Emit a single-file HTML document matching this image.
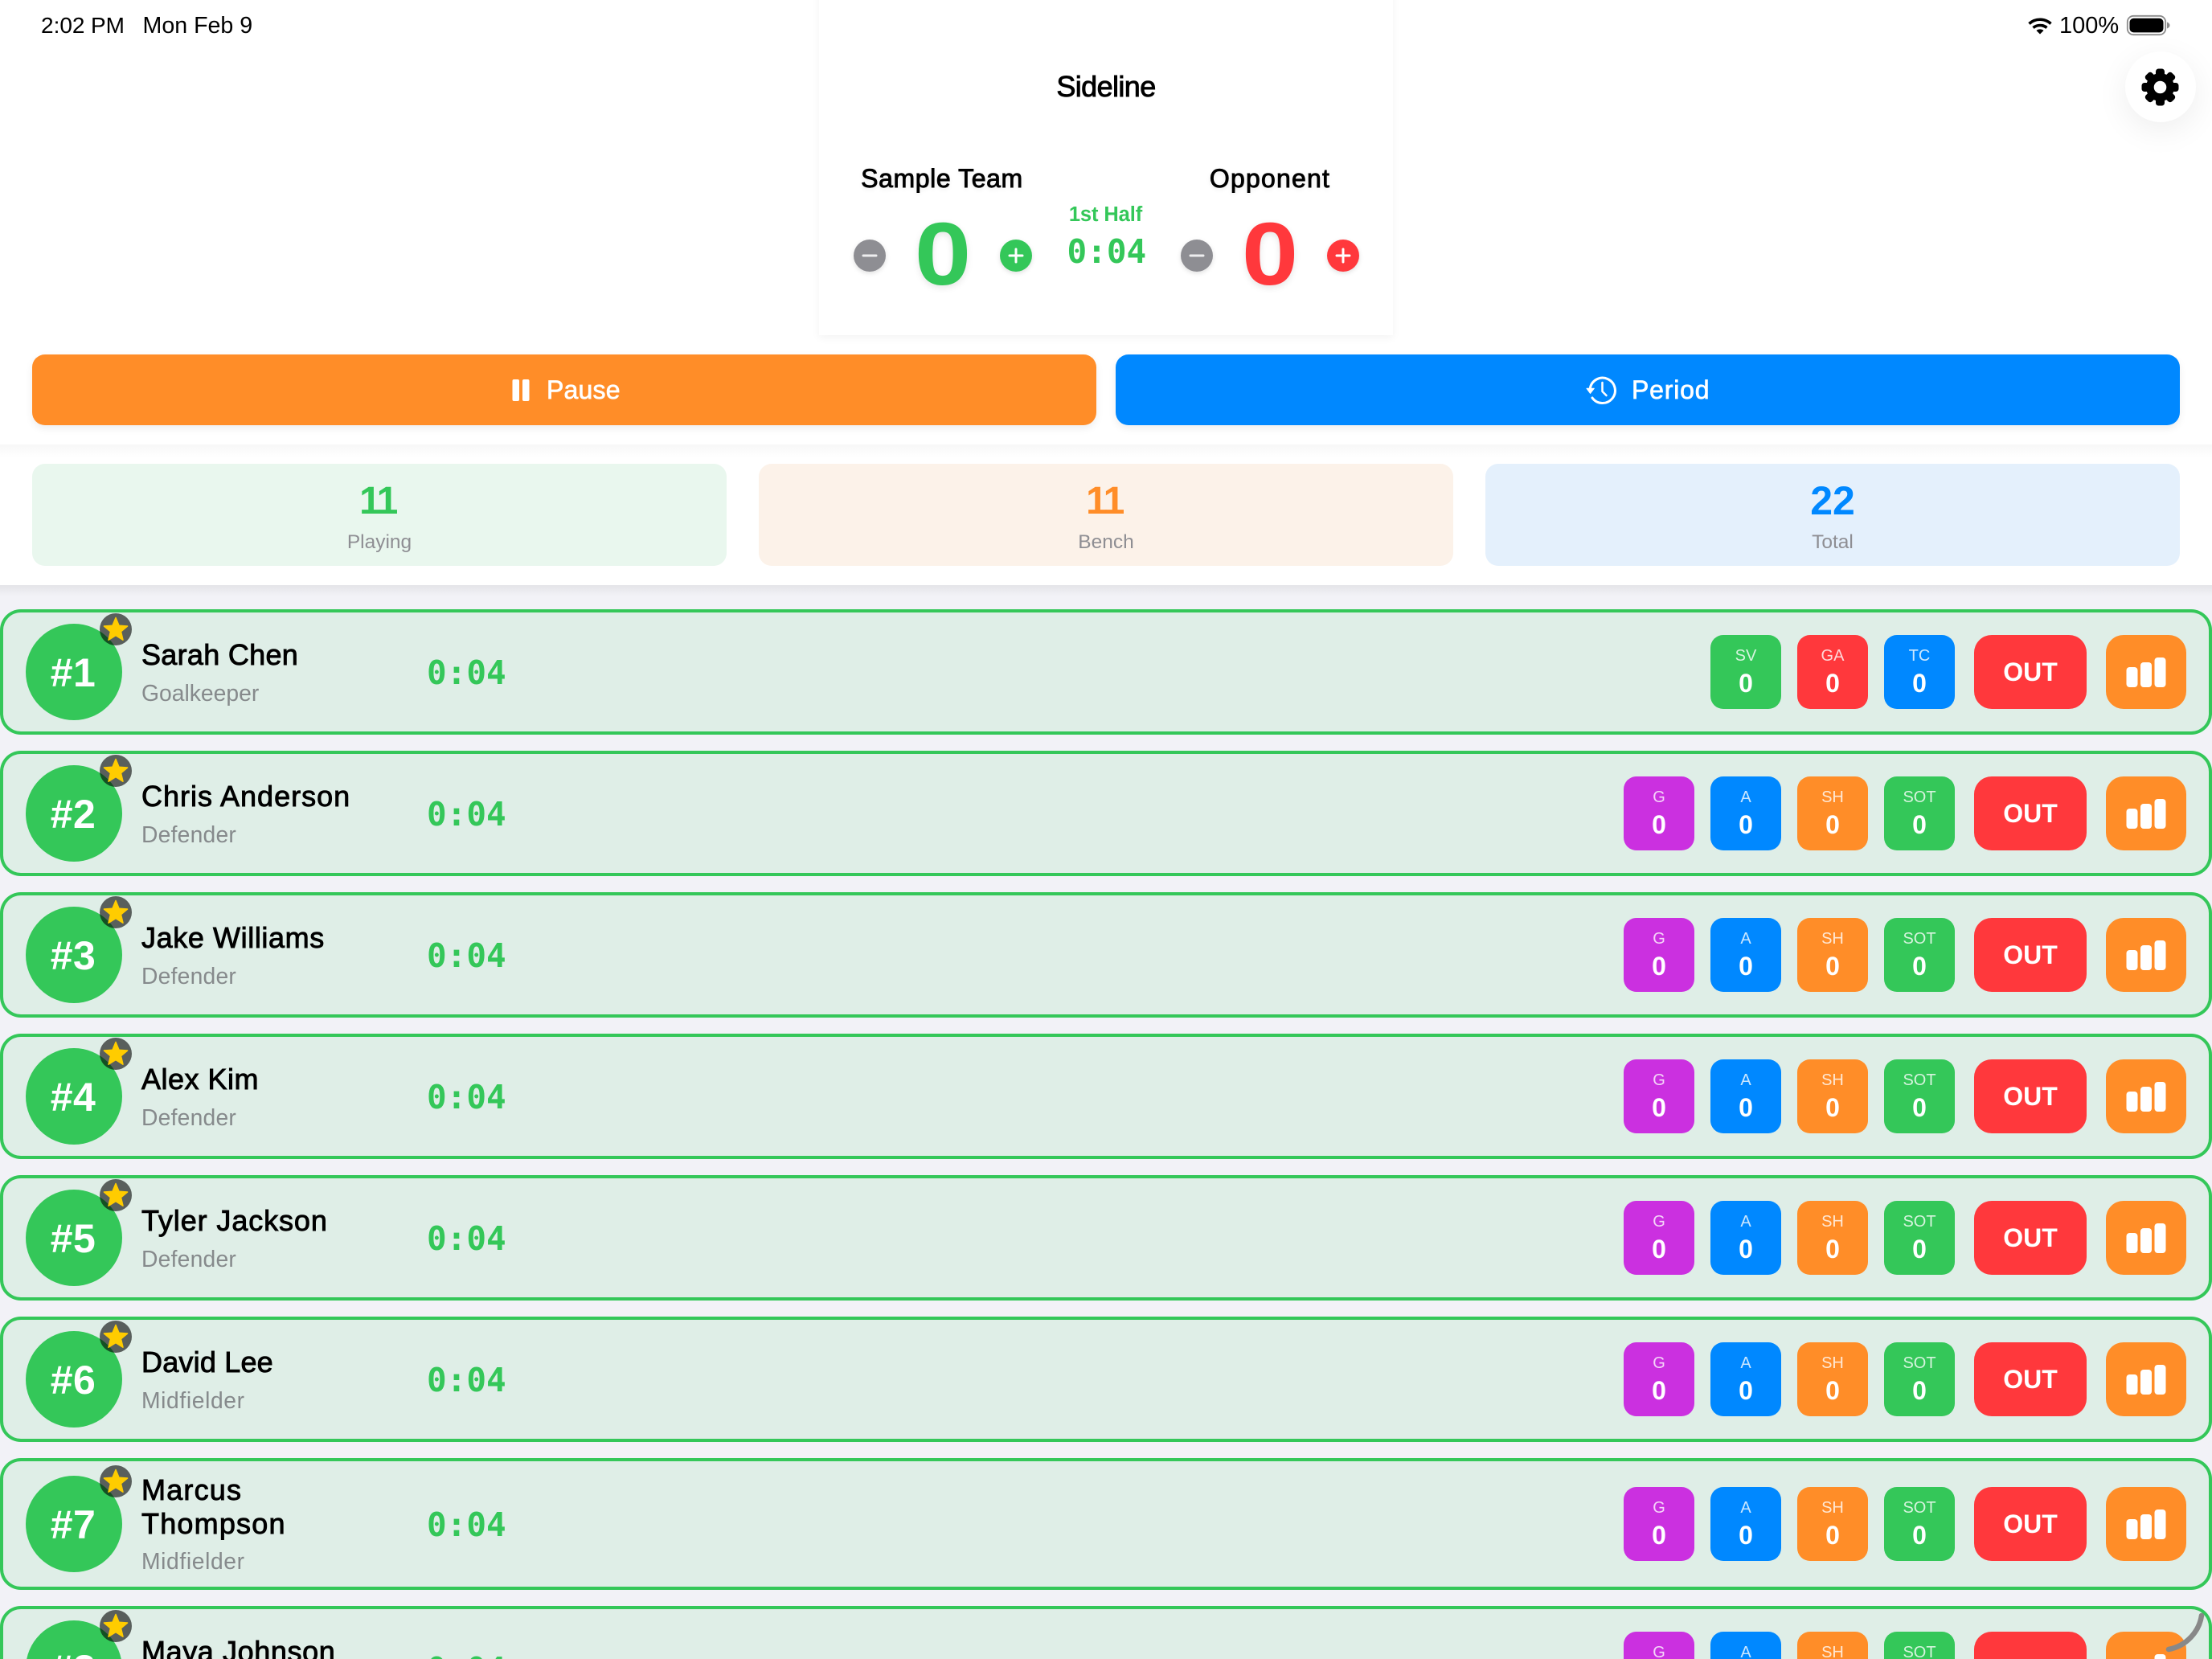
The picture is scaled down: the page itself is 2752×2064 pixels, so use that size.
<!DOCTYPE html>
<html>
<head>
<meta charset="utf-8">
<title>Sideline</title>
<style>
*{box-sizing:border-box;margin:0;padding:0}
html,body{width:2752px;height:2064px;overflow:hidden;background:#f2f2f7;font-family:"Liberation Sans",Arial,sans-serif}
#page{position:relative;width:2752px;height:2064px;overflow:hidden;background:#f2f2f7}
.t{position:absolute;white-space:nowrap;line-height:1}
.m{-webkit-text-stroke:.9px currentColor}
.c{text-align:center}
.mono{font-family:"DejaVu Sans Mono","Liberation Mono",monospace;font-weight:bold;color:#34c759;font-size:41px}
.hdr{position:absolute;left:0;top:0;width:2752px;height:728px;background:#fff}
.sh1{position:absolute;left:0;top:553px;width:2752px;height:16px;background:linear-gradient(rgba(0,0,0,.03),rgba(0,0,0,0))}
.sh2{position:absolute;left:0;top:728px;width:2752px;height:14px;background:linear-gradient(rgba(0,0,0,.06),rgba(0,0,0,0))}
.score{position:absolute;left:1019px;top:-20px;width:714px;height:437px;background:#fff;box-shadow:0 3px 10px rgba(0,0,0,.05)}
.bar{position:absolute;top:441px;height:88px;width:1324px;border-radius:16px;box-shadow:0 4px 10px rgba(0,0,0,.07)}
.stat{position:absolute;top:577px;height:127px;width:864px;border-radius:16px}
.stat b{position:absolute;left:0;width:100%;top:23px;text-align:center;font-size:48px;line-height:1}
.stat span{position:absolute;left:0;width:100%;top:86px;text-align:center;font-size:24.500px;line-height:1;color:#8e8e93}
.gear{position:absolute;left:2644px;top:64px;width:88px;height:88px;border-radius:50%;background:#fff;box-shadow:0 10px 40px rgba(0,0,0,.07)}
.row{position:absolute;left:0;width:2752px;background:#dfeee7;border-radius:26px;box-shadow:inset 0 0 0 4px #34c759}
.num{position:absolute;left:31px;top:calc(50% - 60px);width:120px;height:120px;border-radius:50%;background:#34c759;color:#fff;font-weight:bold;font-size:50px;line-height:122px;text-align:center;letter-spacing:.5px;background-clip:padding-box}
.numbg{position:absolute;left:32px;top:calc(50% - 60px);width:120px;height:120px;border-radius:50%;background:#34c759}
.badge{position:absolute;left:124px;top:calc(50% - 73px);width:40px;height:40px;border-radius:50%;background:rgba(0,0,0,.6)}
.badge svg{position:absolute;left:2px;top:2px;width:36px;height:36px}
.name{position:absolute;left:176px;top:38.500px;font-size:36px;line-height:42px;height:42px;margin-top:-3px;color:#000;white-space:nowrap;letter-spacing:.6px;-webkit-text-stroke:.9px #000}
.role{position:absolute;left:176px;top:90.300px;font-size:28.300px;line-height:1;color:#868a8c;white-space:nowrap}
.tm{position:absolute;left:531px;top:calc(50% - 19.500px);line-height:1;white-space:nowrap}
.b{position:absolute;top:calc(50% - 46px);height:92px;color:#fff;text-align:center}
.s{width:88px;border-radius:16px}
.s i{position:absolute;left:0;width:100%;top:16px;font-style:normal;font-size:20px;line-height:1;color:rgba(255,255,255,.8)}
.s b{position:absolute;left:0;width:100%;top:43.500px;font-size:32px;line-height:1}
.out{left:2456px;width:140px;border-radius:22px;background:#ff383c;font-weight:bold;font-size:32px;line-height:92px}
.ch{left:2620px;width:100px;border-radius:22px;background:#ff8d28}
.ch svg{position:absolute;left:0;top:0;width:100px;height:92px}
.pu{background:#cb30e0}.bl{background:#08f}.or{background:#ff8d28}.gr{background:#34c759}.re{background:#ff383c}
.x1{left:2020px}.x2{left:2128px}.x3{left:2236px}.x4{left:2344px}
#ov{position:absolute;left:0;top:0;width:2752px;height:2064px;pointer-events:none}
</style>
</head>
<body>
<div id="page">
<svg width="0" height="0" style="position:absolute">
<defs>
<symbol id="star" viewBox="0 0 36 36"><path d="M18 3.500 L22 13.200 L32.600 14 L24.500 20.800 L27 31.200 L18 25.600 L9 31.200 L11.500 20.800 L3.400 14 L14 13.200 Z" fill="#ffcc00" stroke="#ffcc00" stroke-width="1.500" stroke-linejoin="round"/></symbol>
<symbol id="chart" viewBox="0 0 100 92"><rect x="25.500" y="40" width="14" height="25" rx="4" fill="#fff"/><rect x="43" y="34" width="14" height="31" rx="4" fill="#fff"/><rect x="60.500" y="28" width="14" height="37" rx="4" fill="#fff"/></symbol>
</defs>
</svg>

<div class="hdr"></div>
<div class="sh1"></div>
<div class="score"></div>

<div class="t" style="left:51px;top:18.300px;font-size:28px">2:02</div>
<div class="t" style="left:113px;top:18.300px;font-size:28px">PM</div>
<div class="t" style="left:177.500px;top:18px;font-size:28.600px">Mon Feb 9</div>
<div class="t" style="left:2562px;top:18px;font-size:29px">100%</div>

<div class="t c m" style="left:1176px;width:400px;top:89.500px;font-size:36px;letter-spacing:-.6px">Sideline</div>
<div class="t c m" style="left:972px;width:400px;top:206px;font-size:32px;letter-spacing:.6px;text-shadow:0 2px 6px rgba(0,0,0,.1)">Sample Team</div>
<div class="t c m" style="left:1380px;width:400px;top:206px;font-size:32px;letter-spacing:1.200px;text-shadow:0 2px 6px rgba(0,0,0,.1)">Opponent</div>
<div class="t c" style="left:1275.500px;width:200px;top:254.500px;font-size:25.500px;font-weight:bold;color:#34c759;letter-spacing:-.1px">1st Half</div>
<div class="t mono" style="left:1327.500px;top:293px">0:04</div>
<div class="t c" style="left:1072.500px;width:200px;top:262px;font-size:110px;font-weight:bold;color:#34c759;text-shadow:0 3px 8px rgba(0,0,0,.1);transform:scaleX(1.15)">0</div>
<div class="t c" style="left:1479.500px;width:200px;top:262px;font-size:110px;font-weight:bold;color:#ff383c;text-shadow:0 3px 8px rgba(0,0,0,.1);transform:scaleX(1.15)">0</div>

<div class="bar" style="left:40px;background:#ff8d28"></div>
<div class="bar" style="left:1388px;background:#08f"></div>
<div class="t" style="left:680px;top:469px;font-size:32px;color:#fff;letter-spacing:.2px;-webkit-text-stroke:.7px #fff">Pause</div>
<div class="t" style="left:2030px;top:469px;font-size:32px;color:#fff;letter-spacing:.8px;-webkit-text-stroke:.7px #fff">Period</div>

<div class="stat" style="left:40px;background:#e9f7ee"><b style="color:#34c759;letter-spacing:-2.500px;left:-2px">11</b><span>Playing</span></div>
<div class="stat" style="left:944px;background:#fcf2e9"><b style="color:#ff8d28;letter-spacing:-2.500px;left:-2px">11</b><span>Bench</span></div>
<div class="stat" style="left:1848px;background:#e4f0fc"><b style="color:#08f;font-size:50px;top:21px">22</b><span>Total</span></div>

<div class="sh2"></div>
<div class="gear"></div>

<div class="row" style="top:758px;height:156px"><div class="numbg"></div><div class="num" style="background:none">#1</div><div class="badge"><svg><use href="#star"/></svg></div><div class="name" style="letter-spacing:.3px">Sarah Chen</div><div class="role">Goalkeeper</div><div class="tm mono">0:04</div>
<div class="b s gr x2"><i>SV</i><b>0</b></div><div class="b s re x3"><i>GA</i><b>0</b></div><div class="b s bl x4"><i>TC</i><b>0</b></div><div class="b out">OUT</div><div class="b ch"><svg><use href="#chart"/></svg></div></div>

<div class="row" style="top:934px;height:156px"><div class="numbg"></div><div class="num" style="background:none">#2</div><div class="badge"><svg><use href="#star"/></svg></div><div class="name" style="letter-spacing:1px">Chris Anderson</div><div class="role" style="letter-spacing:.2px">Defender</div><div class="tm mono">0:04</div>
<div class="b s pu x1"><i>G</i><b>0</b></div><div class="b s bl x2"><i>A</i><b>0</b></div><div class="b s or x3"><i>SH</i><b>0</b></div><div class="b s gr x4"><i>SOT</i><b>0</b></div><div class="b out">OUT</div><div class="b ch"><svg><use href="#chart"/></svg></div></div>

<div class="row" style="top:1110px;height:156px"><div class="numbg"></div><div class="num" style="background:none">#3</div><div class="badge"><svg><use href="#star"/></svg></div><div class="name">Jake Williams</div><div class="role" style="letter-spacing:.2px">Defender</div><div class="tm mono">0:04</div>
<div class="b s pu x1"><i>G</i><b>0</b></div><div class="b s bl x2"><i>A</i><b>0</b></div><div class="b s or x3"><i>SH</i><b>0</b></div><div class="b s gr x4"><i>SOT</i><b>0</b></div><div class="b out">OUT</div><div class="b ch"><svg><use href="#chart"/></svg></div></div>

<div class="row" style="top:1286px;height:156px"><div class="numbg"></div><div class="num" style="background:none">#4</div><div class="badge"><svg><use href="#star"/></svg></div><div class="name" style="letter-spacing:.5px">Alex Kim</div><div class="role" style="letter-spacing:.2px">Defender</div><div class="tm mono">0:04</div>
<div class="b s pu x1"><i>G</i><b>0</b></div><div class="b s bl x2"><i>A</i><b>0</b></div><div class="b s or x3"><i>SH</i><b>0</b></div><div class="b s gr x4"><i>SOT</i><b>0</b></div><div class="b out">OUT</div><div class="b ch"><svg><use href="#chart"/></svg></div></div>

<div class="row" style="top:1462px;height:156px"><div class="numbg"></div><div class="num" style="background:none">#5</div><div class="badge"><svg><use href="#star"/></svg></div><div class="name" style="letter-spacing:.9px">Tyler Jackson</div><div class="role" style="letter-spacing:.2px">Defender</div><div class="tm mono">0:04</div>
<div class="b s pu x1"><i>G</i><b>0</b></div><div class="b s bl x2"><i>A</i><b>0</b></div><div class="b s or x3"><i>SH</i><b>0</b></div><div class="b s gr x4"><i>SOT</i><b>0</b></div><div class="b out">OUT</div><div class="b ch"><svg><use href="#chart"/></svg></div></div>

<div class="row" style="top:1638px;height:156px"><div class="numbg"></div><div class="num" style="background:none">#6</div><div class="badge"><svg><use href="#star"/></svg></div><div class="name" style="letter-spacing:.2px">David Lee</div><div class="role" style="letter-spacing:.6px">Midfielder</div><div class="tm mono">0:04</div>
<div class="b s pu x1"><i>G</i><b>0</b></div><div class="b s bl x2"><i>A</i><b>0</b></div><div class="b s or x3"><i>SH</i><b>0</b></div><div class="b s gr x4"><i>SOT</i><b>0</b></div><div class="b out">OUT</div><div class="b ch"><svg><use href="#chart"/></svg></div></div>

<div class="row" style="top:1814px;height:164px"><div class="numbg"></div><div class="num" style="background:none">#7</div><div class="badge"><svg><use href="#star"/></svg></div><div class="name" style="top:22px;height:84px;letter-spacing:1.200px">Marcus<br>Thompson</div><div class="role" style="top:114.300px;letter-spacing:.6px">Midfielder</div><div class="tm mono">0:04</div>
<div class="b s pu x1"><i>G</i><b>0</b></div><div class="b s bl x2"><i>A</i><b>0</b></div><div class="b s or x3"><i>SH</i><b>0</b></div><div class="b s gr x4"><i>SOT</i><b>0</b></div><div class="b out">OUT</div><div class="b ch"><svg><use href="#chart"/></svg></div></div>

<div class="row" style="top:1998px;height:156px"><div class="numbg"></div><div class="num" style="background:none">#8</div><div class="badge"><svg><use href="#star"/></svg></div><div class="name">Maya Johnson</div><div class="role">Midfielder</div><div class="tm mono">0:04</div>
<div class="b s pu x1"><i>G</i><b>0</b></div><div class="b s bl x2"><i>A</i><b>0</b></div><div class="b s or x3"><i>SH</i><b>0</b></div><div class="b s gr x4"><i>SOT</i><b>0</b></div><div class="b out">OUT</div><div class="b ch"><svg><use href="#chart"/></svg></div></div>

<svg id="ov" viewBox="0 0 2752 2064" xmlns="http://www.w3.org/2000/svg">
<!-- wifi -->
<g fill="none" stroke="#000" stroke-width="3.600">
<path d="M2524.500 29.500 A20 20 0 0 1 2551.500 29.500"/>
<path d="M2529.500 34.500 A13.500 13.500 0 0 1 2546.500 34.500"/>
</g>
<path d="M2533.500 38 A7 7 0 0 1 2542.500 38 L2538 42.500 Z" fill="#000"/>
<!-- battery -->
<rect x="2646.800" y="19.800" width="47.400" height="23.400" rx="7.500" fill="none" stroke="#8c8c8c" stroke-width="1.800"/>
<rect x="2649.500" y="22.800" width="42" height="17.600" rx="5" fill="#000"/>
<path d="M2696 27.500 C2698.500 28.500 2699.500 30 2699.500 31.500 C2699.500 33 2698.500 34.500 2696 35.500 Z" fill="#8c8c8c"/>
<!-- gear -->
<g transform="translate(2687.500 108.500)" fill="#000">
<circle r="17.500"/>
<rect x="-5.500" y="-23" width="11" height="14" rx="3.500"/>
<rect x="-5.500" y="-23" width="11" height="14" rx="3.500" transform="rotate(45)"/>
<rect x="-5.500" y="-23" width="11" height="14" rx="3.500" transform="rotate(90)"/>
<rect x="-5.500" y="-23" width="11" height="14" rx="3.500" transform="rotate(135)"/>
<rect x="-5.500" y="-23" width="11" height="14" rx="3.500" transform="rotate(180)"/>
<rect x="-5.500" y="-23" width="11" height="14" rx="3.500" transform="rotate(225)"/>
<rect x="-5.500" y="-23" width="11" height="14" rx="3.500" transform="rotate(270)"/>
<rect x="-5.500" y="-23" width="11" height="14" rx="3.500" transform="rotate(315)"/>
<circle r="7.800" fill="#fff"/>
</g>
<!-- score buttons -->
<g style="filter:drop-shadow(0 2px 3px rgba(0,0,0,.12))">
<circle cx="1082" cy="318" r="20" fill="#8e8e93"/>
<circle cx="1264" cy="318" r="20" fill="#34c759"/>
<circle cx="1489" cy="318" r="20" fill="#8e8e93"/>
<circle cx="1671" cy="318" r="20" fill="#ff383c"/>
</g>
<g stroke="#fff" stroke-width="3" stroke-linecap="round" fill="none">
<path d="M1074 318H1090" opacity=".85"/>
<path d="M1256 318H1272M1264 310V326"/>
<path d="M1481 318H1497" opacity=".85"/>
<path d="M1663 318H1679M1671 310V326"/>
</g>
<!-- pause -->
<rect x="637.500" y="472" width="8.500" height="27" rx="2" fill="#fff"/>
<rect x="650" y="472" width="8.500" height="27" rx="2" fill="#fff"/>
<!-- history clock -->
<g fill="none" stroke="#fff" stroke-linecap="round" stroke-linejoin="round">
<path d="M1978.300 483 A15.700 15.700 0 1 1 1981 495" stroke-width="3"/>
<path d="M1993.500 476 V487 L1998.500 492" stroke-width="2.500"/>
</g>
<path d="M1974 483.300 H1983.300 L1978.500 489.500 Z" fill="#fff" stroke="#fff" stroke-width="1" stroke-linejoin="round"/>
<!-- scroll indicator -->
<path d="M2739 2010 C2736 2030 2720 2048 2698 2052" fill="none" stroke="#888" stroke-width="6.500" stroke-linecap="round"/>
</svg>
</div>
</body>
</html>
